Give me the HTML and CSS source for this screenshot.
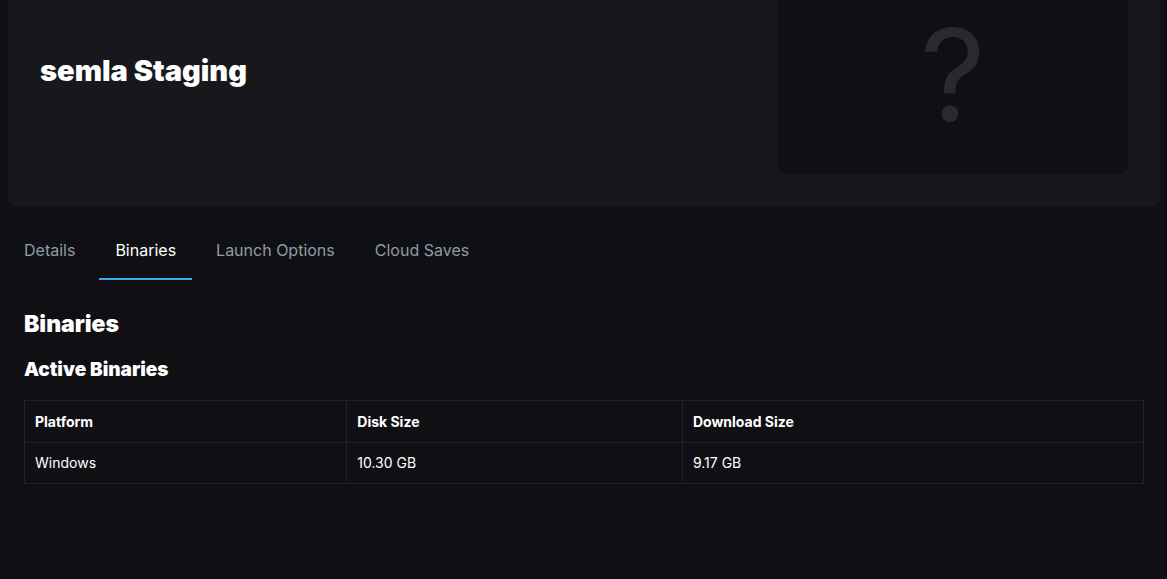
FILE: index.html
```html
<!DOCTYPE html>
<html lang="en">
<head>
  <meta charset="UTF-8">
  <meta name="viewport" content="width=device-width, initial-scale=1.0">
  <title>semla Staging</title>
  <link rel="stylesheet" href="styles.css">
</head>
<body>
  <div class="container">
    <header class="hero">
      <h1>semla Staging</h1>
      <div class="cover">?</div>
    </header>

    <nav class="tabs">
      <a href="#details">Details</a>
      <a href="#binaries" class="active">Binaries</a>
      <a href="#launch-options">Launch Options</a>
      <a href="#cloud-saves">Cloud Saves</a>
    </nav>

    <main class="content" id="binaries">
      <h2>Binaries</h2>
      <h3>Active Binaries</h3>
      <table>
        <thead>
          <tr>
            <th class="platform">Platform</th>
            <th class="disk">Disk Size</th>
            <th>Download Size</th>
          </tr>
        </thead>
        <tbody>
          <tr>
            <td>Windows</td>
            <td>10.30 GB</td>
            <td>9.17 GB</td>
          </tr>
        </tbody>
      </table>
    </main>
  </div>
</body>
</html>
```
FILE: styles.css
```css
body {
  margin: 0;
  font-family: Inter, "Liberation Sans", sans-serif;
  font-size: 16px;
  line-height: 24px;
  background-color: #101014;
  color: #fff;
}
.container {
  margin: 0 7px 0 8px;
}
.hero {
  display: flex;
  justify-content: space-between;
  align-items: flex-start;
  padding: 0 32px 32px;
  background-color: #18181c;
  border-radius: 0 0 8px 8px;
}
.hero h1 {
  margin: 51px 0 0;
  font-size: 29px;
  line-height: 40px;
  font-weight: 900;
}
.cover {
  width: 350px;
  height: 174px;
  border-radius: 0 0 8px 8px;
  background-color: #101014;
  color: #2a2a2e;
  font-size: 128px;
  line-height: 150px;
  text-align: center;
}
.tabs {
  display: flex;
  gap: 8px;
  padding-top: 16px;
}
.tabs a {
  padding: 16px;
  border-bottom: 2px solid transparent;
  color: #8f9ba8;
  text-decoration: none;
}
.tabs a:hover,
.tabs a.active {
  color: #fff;
}
.tabs a.active {
  border-bottom-color: #3daee9;
}
.content {
  padding: 28px 16px;
}
h2,
h3 {
  margin: 0 0 16px;
  font-weight: 900;
}
h2 {
  font-size: 23px;
  line-height: 32px;
}
h3 {
  font-size: 19px;
  line-height: 28px;
}
table {
  width: 100%;
  border-collapse: collapse;
  font-size: 14px;
  line-height: 20px;
}
th,
td {
  padding: 10px;
  border: 1px solid #222226;
  text-align: left;
}
th {
  line-height: 21px;
}
.platform {
  width: 28.8%;
}
.disk {
  width: 30%;
}
```
